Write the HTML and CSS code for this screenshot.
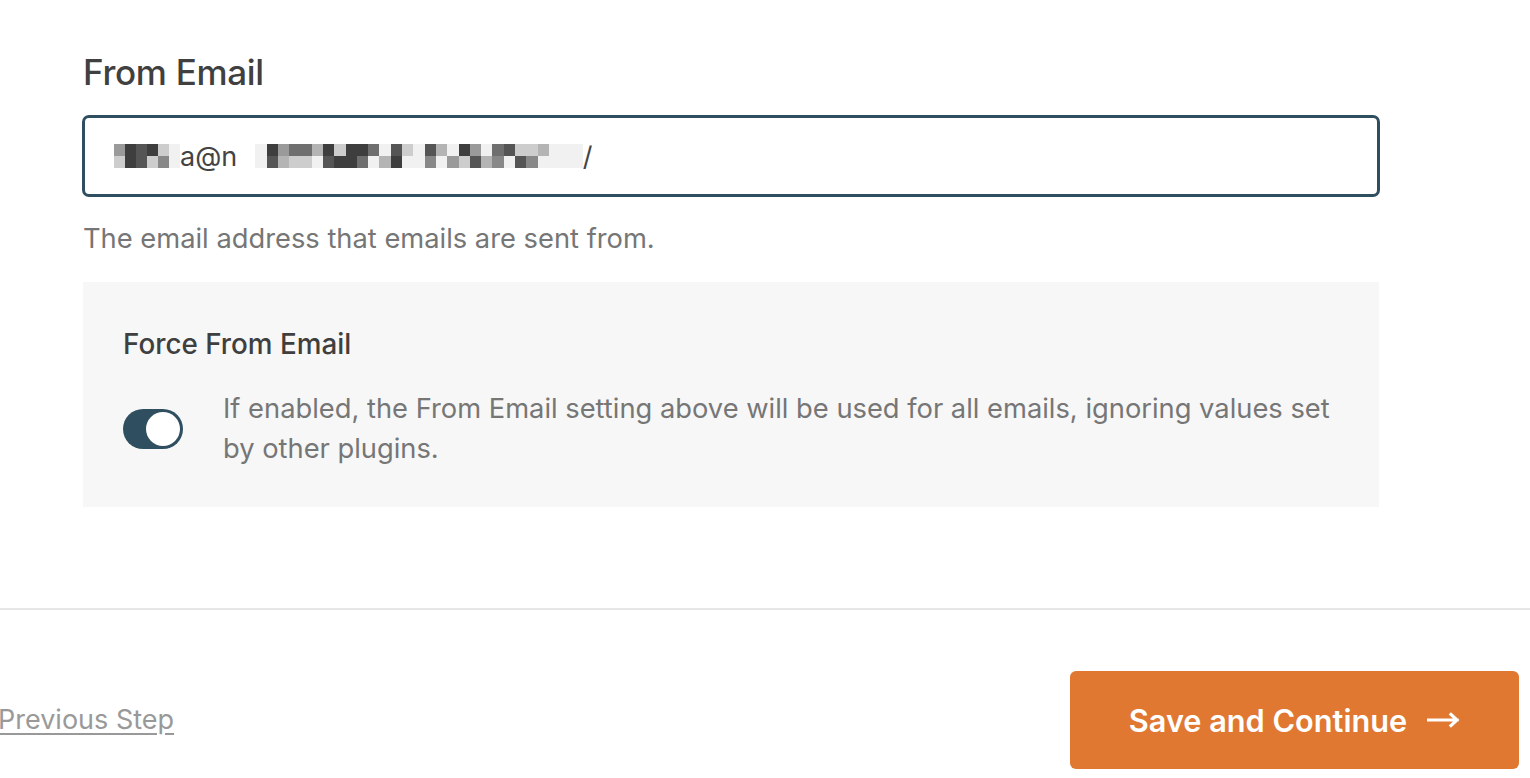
FILE: index.html
```html
<!DOCTYPE html>
<html lang="en">
<head>
<meta charset="utf-8">
<title>From Email</title>
<link rel="stylesheet" href="styles.css">
</head>
<body>
<main class="content">
  <h2 class="label">From Email</h2>
  <div class="input">
    <span class="pix">
      <i class="c6"></i><i class="c2"></i><i class="c3"></i><i class="c2"></i><i class="c8"></i><i class="c9"></i>
      <i class="c8"></i><i class="c2"></i><i class="c3"></i><i class="c8"></i><i class="c5"></i><i class="c9"></i>
    </span><span class="mail">a@n</span><span class="pix wide">
      <i class="c9"></i><i class="c2"></i><i class="c6"></i><i class="c4"></i><i class="c4"></i><i class="c7"></i><i class="c2"></i><i class="c8"></i><i class="c2"></i><i class="c2"></i><i class="c4"></i><i class="c9"></i><i class="c3"></i><i class="c8"></i><i class="c9"></i><i class="c3"></i><i class="c7"></i><i class="c9"></i><i class="c2"></i><i class="c6"></i><i class="c9"></i><i class="c4"></i><i class="c3"></i><i class="c8"></i><i class="c8"></i><i class="c7"></i><i class="c9"></i><i class="c9"></i><i class="c9"></i>
      <i class="c9"></i><i class="c3"></i><i class="c7"></i><i class="c8"></i><i class="c8"></i><i class="c9"></i><i class="c3"></i><i class="c2"></i><i class="c2"></i><i class="c4"></i><i class="c9"></i><i class="c7"></i><i class="c2"></i><i class="c9"></i><i class="c9"></i><i class="c5"></i><i class="c9"></i><i class="c6"></i><i class="c8"></i><i class="c3"></i><i class="c7"></i><i class="c5"></i><i class="c9"></i><i class="c3"></i><i class="c5"></i><i class="c9"></i><i class="c9"></i><i class="c9"></i><i class="c9"></i>
    </span><span class="mail">/</span>
  </div>
  <p class="help">The email address that emails are sent from.</p>
  <section class="panel">
    <h3 class="panel-title">Force From Email</h3>
    <div class="panel-row">
      <span class="toggle"><span class="knob"></span></span>
      <p class="panel-desc">If enabled, the From Email setting above will be used for all emails, ignoring values set by other plugins.</p>
    </div>
  </section>
</main>
<footer class="footer">
  <a class="prev" href="#">Previous Step</a>
  <button class="save" type="button">Save and Continue <svg class="arrow" width="33" height="16" viewBox="0 0 33 16" aria-hidden="true"><path d="M1 8H30M24 2.5L30 8L24 13.5" fill="none" stroke="#fff" stroke-width="3.2" stroke-linecap="square"/></svg></button>
</footer>
</body>
</html>
```
FILE: styles.css
```css
html, body {
  margin: 0;
  padding: 0;
  background: #fff;
  font-family: Inter, "Noto Sans", sans-serif;
  overflow: hidden;
}

.content {
  width: 1296px;
  margin-left: 83px;
  padding-top: 52px;
}

.label {
  margin: 0 0 23px;
  font-size: 35px;
  line-height: 40px;
  font-weight: 500;
  color: #404040;
  letter-spacing: -0.3px;
}

.input {
  box-sizing: border-box;
  height: 82px;
  margin: 0 -1px;
  border: 3px solid #2f4f60;
  border-radius: 7px;
  padding-left: 29px;
  display: flex;
  align-items: center;
  font-size: 27px;
  color: #444;
}

.mail {
  line-height: 1;
}

.pix {
  display: grid;
  grid-template-columns: repeat(6, 11px);
  grid-auto-rows: 12px;
}

.pix.wide {
  grid-template-columns: repeat(29, 11.3px);
  margin-left: 18px;
}

.pix i { display: block; }
.c2 { background: #3e3e3e; }
.c3 { background: #555; }
.c4 { background: #6f6f6f; }
.c5 { background: #888; }
.c6 { background: #9a9a9a; }
.c7 { background: #b4b4b4; }
.c8 { background: #cdcdcd; }
.c9 { background: #f1f1f1; }

.help {
  margin: 24px 0 25px;
  font-size: 27.3px;
  line-height: 36px;
  color: #767676;
}

.panel {
  background: #f7f7f7;
  padding: 44px 40px 38px;
}

.panel-title {
  margin: 0 0 27px;
  font-size: 27.8px;
  line-height: 36px;
  font-weight: 500;
  color: #3f3f3f;
}

.panel-row {
  display: flex;
  align-items: center;
  gap: 40px;
}

.toggle {
  flex: none;
  box-sizing: border-box;
  width: 60px;
  height: 40px;
  border-radius: 20px;
  background: #2f4f60;
  padding: 3px;
  display: flex;
  justify-content: flex-end;
}

.knob {
  width: 34px;
  height: 34px;
  border-radius: 50%;
  background: #fff;
}

.panel-desc {
  margin: 0;
  max-width: 1116px;
  font-size: 27.3px;
  line-height: 40px;
  color: #767676;
}

.footer {
  margin-top: 101px;
  border-top: 2px solid #e6e6e6;
  padding: 61px 11px 0 0;
  display: flex;
  align-items: center;
  justify-content: space-between;
}

.prev {
  margin-left: -2px;
  font-size: 27px;
  line-height: 36px;
  color: #999;
  text-decoration: underline;
  text-underline-offset: 4px;
}

.save {
  width: 449px;
  height: 98px;
  border: 0;
  border-radius: 6px;
  background: #e07832;
  color: #fff;
  font-family: Inter, "Noto Sans", sans-serif;
  font-size: 30.7px;
  font-weight: 600;
  display: flex;
  align-items: center;
  justify-content: center;
  gap: 20px;
}

.arrow {
  flex: none;
}
```
